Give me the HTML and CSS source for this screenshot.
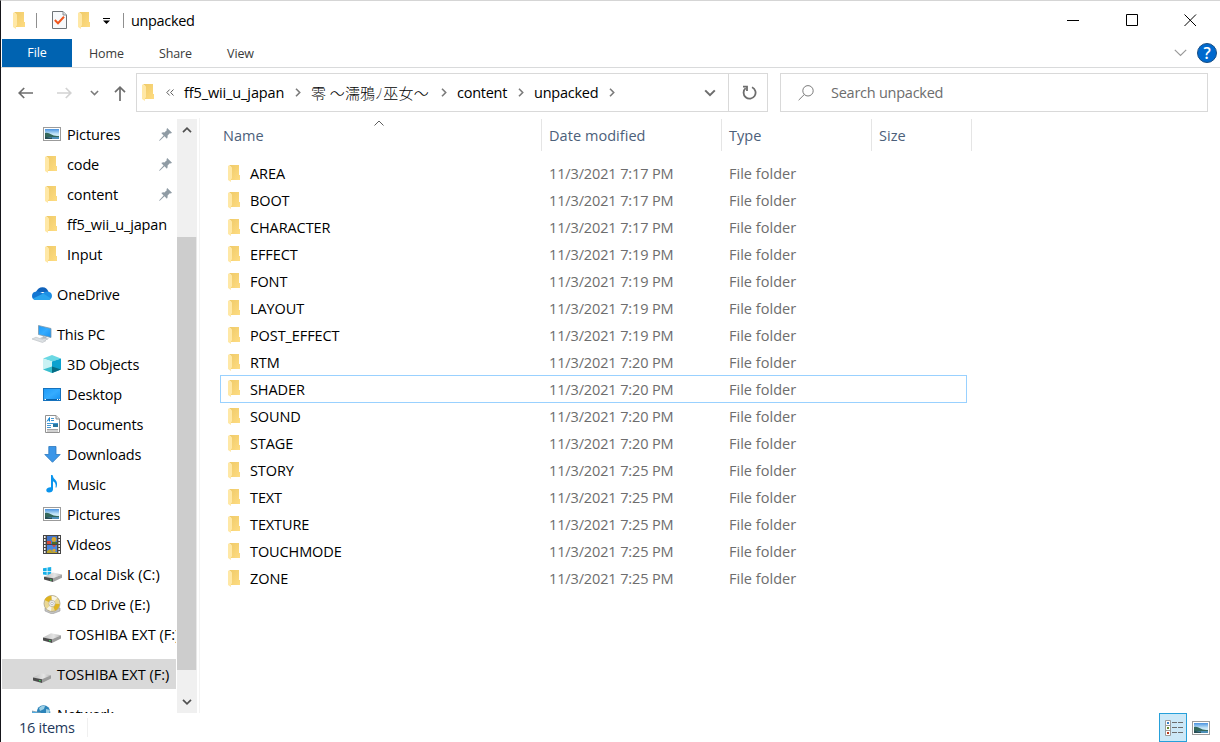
FILE: index.html
```html
<!DOCTYPE html>
<html lang="en">
<head>
  <meta charset="UTF-8" />
  <title>unpacked</title>
  <link rel="stylesheet" href="styles.css">
</head>
<body>

  <!-- shared icons -->
  <svg class="defs" width="0" height="0">
    <defs>
      <linearGradient id="gold" x1="0" x2="1" y1="0" y2="1">
        <stop offset="0" stop-color="#efca68" /><stop offset="1" stop-color="#fedc82" />
      </linearGradient>
      <linearGradient id="sky" x1="0" x2="0" y1="0" y2="1">
        <stop offset="0" stop-color="#4a93e0" /><stop offset="0.5" stop-color="#c5e6f7" /><stop offset="1" stop-color="#d9f0f8" />
      </linearGradient>
      <linearGradient id="screen" x1="0" x2="1" y1="0" y2="1">
        <stop offset="0" stop-color="#1e9bf8" /><stop offset="0.5" stop-color="#35acff" /><stop offset="1" stop-color="#1690f0" />
      </linearGradient>
      <linearGradient id="metal" x1="0" x2="1">
        <stop offset="0" stop-color="#bdbdbd" /><stop offset="0.6" stop-color="#e4e4e4" /><stop offset="1" stop-color="#b5b5b5" />
      </linearGradient>
    </defs>

    <symbol id="folder" viewBox="0 0 12 17">
      <path d="M1 0H11V10H12V15H3V2Z" fill="url(#gold)" />
      <path d="M0 0.5L3 1.5Q4 2 4 3V13.5L3 14V17L0 15Z" fill="#ffe8a6" />
    </symbol>

    <symbol id="pictures" viewBox="0 0 18 14">
      <rect x="0.5" y="0.5" width="17" height="13" fill="#fff" stroke="#9b9b9b" />
      <rect x="2" y="2" width="14" height="10" fill="url(#sky)" />
      <path d="M2 6Q5 5 8 7.3T16 9V10H2Z" fill="#34685b" />
      <path d="M2 10H16V12H2Z" fill="#4d8fb8" />
      <path d="M2 9.5Q6 11 9 10.5V12H2Z" fill="#294f55" />
    </symbol>

    <symbol id="pin" viewBox="0 0 13 13">
      <path d="M8.2 0L13 4.8L11.8 5.5L10.8 5.2L8.6 7.6Q9 9.4 7.9 10.7L5.5 8.3L0.8 12.8L0 12.4L4.6 7.4L2.3 5.1Q3.8 4 5.4 4.4L7.8 2.2L7.5 1.2Z" fill="#8f9ba4" />
    </symbol>

    <symbol id="cloud" viewBox="0 0 20 14">
      <path d="M4 5Q6 0.3 10.5 0.3Q15 0.3 16.5 5Z" fill="#0f62bb" />
      <path d="M0 9Q0 4.8 4.5 4.4Q8 4 13 8L7 13H3.5Q0 12.5 0 9Z" fill="#1376d3" />
      <path d="M10 7Q13 4 16.2 4.7Q20 5.3 20 9Q19.6 13 16 13Z" fill="#1d8fe4" />
      <path d="M1 11.4L11.3 6.4L19 11.5Q18 13 16 13H4Q2 13 1 11.4Z" fill="#2aa4ee" />
    </symbol>

    <symbol id="pc" viewBox="0 0 20 18">
      <path d="M6.5 0.5L19 3.5V12.5L6.5 9.5Z" fill="url(#screen)" stroke="#7e98aa" stroke-width="0.8" />
      <path d="M11 11L14.5 12V13.5L10 13Z" fill="#aeb6bd" />
      <path d="M9 12.2L17 13.5L15 15L8 13.5Z" fill="#c1c6cb" />
      <path d="M0 14L4 12.2L14 15.7L10.5 17.5Z" fill="#dce0e3" stroke="#b8bdc2" stroke-width="0.6" />
    </symbol>

    <symbol id="cube" viewBox="0 0 18 18">
      <path d="M9 0L18 3.5L9 6.5L0 3.5Z" fill="#6bd8e3" />
      <path d="M0 3.5L9 6.5V18L0 14.5Z" fill="#c9f2f4" />
      <path d="M18 3.5L9 6.5V18L18 14.5Z" fill="#0ca2cf" />
      <path d="M0 14.5L9 11.5V18Z" fill="#39bfcf" />
      <path d="M18 14.5L9 11.5V18Z" fill="#076b82" />
    </symbol>

    <symbol id="desktop" viewBox="0 0 18 13">
      <rect x="0.5" y="0.5" width="17" height="12" fill="url(#screen)" stroke="#1672bd" />
      <path d="M1 11.5H17" stroke="#0964ad" />
      <path d="M1.5 11.5H3M14 11.5H15M16 11.5H17" stroke="#fff" />
    </symbol>

    <symbol id="document" viewBox="0 0 15 18">
      <path d="M0.5 0.5H11L14.5 4V17.5H0.5Z" fill="#fff" stroke="#929292" />
      <path d="M11 0.5V4H14.5" fill="#e5e5e5" stroke="#929292" />
      <path d="M2 6.5L4.5 2.5V6.5M3 5H5" stroke="#1585d3" fill="none" />
      <path d="M6 3.5H9M6 5.5H9M2 8.5H13M2 10.5H6M2 12.5H6" stroke="#4297d4" />
      <rect x="8" y="9" width="5" height="3" fill="#28769f" />
      <path d="M2 14.5H13M2 16H13" stroke="#a3a3a3" />
    </symbol>

    <symbol id="download" viewBox="0 0 17 17">
      <path d="M4.8 0.5H12V8.5H16.2L8.5 16.3L0.8 8.5H4.8Z" fill="#3b96e8" stroke="#2b77bd" stroke-width="0.8" />
    </symbol>

    <symbol id="music" viewBox="0 0 12 18">
      <path d="M5 0H6.5Q7 3 9.5 5Q12 7.5 10.5 12.5H9.5Q10.5 8 7 6.3V14.5Q6.7 17.5 3 17.6Q0 17.2 0.3 14.8Q1 12 5 12.2Z" fill="#0a94ed" />
    </symbol>

    <symbol id="video" viewBox="0 0 18 19">
      <rect width="18" height="19" fill="#454545" />
      <path d="M1.8 1V19M16.2 1V19" stroke="#f2f2f2" stroke-width="1.6" stroke-dasharray="2 1" />
      <rect x="4" y="1" width="10" height="8" fill="#4476c8" />
      <rect x="4" y="10" width="10" height="8" fill="#4a86df" />
      <path d="M4 6H8V9H4Z" fill="#d64a36" />
      <circle cx="11" cy="4.5" r="2.4" fill="#dda92c" />
      <path d="M9 7H14V9H9Z" fill="#4c6e27" />
      <path d="M9 10H13L11 12.5Z" fill="#d64a36" />
      <path d="M4 16L7 14L10 17H14V18H4Z" fill="#bba32c" />
      <circle cx="11" cy="15.3" r="1.6" fill="#e0a32a" />
    </symbol>

    <symbol id="drive" viewBox="0 0 18 10">
      <path d="M0 4.6L8 0.3L18 2.2L9 6.2Z" fill="url(#metal)" />
      <path d="M0 4.6L9 6.2V10L0 7.5Z" fill="#4c4c4c" />
      <path d="M9 6.2L18 2.2V5.5L9 10Z" fill="#9c9c9c" />
      <rect x="6" y="7" width="1.6" height="1.2" fill="#3bcb58" />
    </symbol>

    <symbol id="system-drive" viewBox="0 0 19 15">
      <path d="M0 1.2L3.7 0.7V3.9H0ZM4.5 0.6L8.2 0V3.9H4.5ZM0 4.7H3.7V8L0 7.5ZM4.5 4.7H8.2V8.6L4.5 8.1Z" fill="#18b0e8" />
      <path d="M1 9.7L10 5.5L19 7.5L10 11.3Z" fill="url(#metal)" />
      <path d="M1 9.7L10 11.3V15L1 12.5Z" fill="#4c4c4c" />
      <path d="M10 11.3L19 7.5V10.8L10 15Z" fill="#a2a2a2" />
      <rect x="7" y="12.3" width="1.6" height="1.2" fill="#3bcb58" />
    </symbol>

    <symbol id="cd" viewBox="0 0 18 19">
      <path d="M2 13L9 11L17 13V16L9 19L2 16Z" fill="#c3c3c3" stroke="#999" stroke-width="0.6" />
      <circle cx="9" cy="8.5" r="8" fill="#ead895" stroke="#a8a28c" stroke-width="0.8" />
      <path d="M9 8.5L1.5 5Q3.5 1 8 0.7ZM9 8.5L16.7 9Q16 14 12 15.8Z" fill="#dfb321" />
      <path d="M9 8.5L9 0.7L14.5 2.8ZM9 8.5L8 16L3.5 14Z" fill="#f7f4e8" />
      <circle cx="9" cy="8.5" r="3.2" fill="#f0f0ee" stroke="#b3ad98" stroke-width="0.7" />
      <circle cx="9" cy="8.5" r="1.3" fill="#fff" stroke="#999" stroke-width="0.6" />
    </symbol>

    <symbol id="network" viewBox="0 0 19 18">
      <circle cx="11.5" cy="7" r="6.8" fill="#2b83b9" />
      <path d="M7 3Q10 0 13 1L12 4L8 6ZM14 4L18 5L17 9L14 8Z" fill="#9ccfe5" />
      <path d="M0 6L9 8V15L0 13Z" fill="#48aeea" stroke="#8198a8" stroke-width="0.8" />
    </symbol>

    <symbol id="chevron" viewBox="0 0 10 6">
      <path d="M1 0.8L5 4.8L9 0.8" fill="none" stroke="currentColor" stroke-width="1.7" />
    </symbol>
    <symbol id="crumb" viewBox="0 0 6 9">
      <path d="M1 0.8L4.7 4.5L1 8.2" fill="none" stroke="#7b7b7b" stroke-width="1.6" />
    </symbol>
  </svg>

  <div class="window">
    <header class="titlebar">
      <svg class="folder"><use href="#folder" /></svg>
      <span class="divider first"></span>
      <svg class="properties" viewBox="0 0 15 18">
        <path d="M0.5 0.5H11L14.5 4V17.5H0.5Z" fill="#f7f9fb" stroke="#6f7478" />
        <path d="M11 0.5V4H14.5" fill="#ddd" stroke="#8d9296" />
        <path d="M2.8 9L6 12.2L12 5.8" fill="none" stroke="#f0561d" stroke-width="2" />
      </svg>
      <svg class="folder new"><use href="#folder" /></svg>
      <svg class="customize" viewBox="0 0 7 6"><path d="M0 0H7V1H0ZM0 2.5H7L3.5 6Z" /></svg>
      <span class="divider"></span>
      <h1>unpacked</h1>
      <div class="controls">
        <svg viewBox="0 0 13 13"><path d="M0 6.5H12" /></svg>
        <svg viewBox="0 0 13 13"><path d="M0.5 0.5H11.5V11.5H0.5Z" /></svg>
        <svg viewBox="0 0 13 13"><path d="M0.5 0.5L12 12M12 0.5L0.5 12" /></svg>
      </div>
    </header>

    <nav class="tabs">
      <span class="tab file">File</span>
      <span class="tab home">Home</span>
      <span class="tab share">Share</span>
      <span class="tab view">View</span>
      <svg class="expand" viewBox="0 0 13 8"><path d="M0.8 0.8L6.5 6.5L12.2 0.8" /></svg>
      <span class="help">?</span>
    </nav>

    <div class="toolbar">
      <div class="nav">
        <svg class="back" viewBox="0 0 15 12"><path d="M15 6H1M6.2 1L1.2 6L6.2 11" /></svg>
        <svg class="forward" viewBox="0 0 15 12"><path d="M0 6H14M8.8 1L13.8 6L8.8 11" /></svg>
        <svg class="recent"><use href="#chevron" /></svg>
        <svg class="up" viewBox="0 0 12 15"><path d="M6 15V1M1 6.2L6 1.2L11 6.2" /></svg>
      </div>
      <div class="address">
        <svg class="folder"><use href="#folder" /></svg>
        <svg class="more" viewBox="0 0 8 7"><path d="M3.7 0.5L0.8 3.5L3.7 6.5M7.5 0.5L4.6 3.5L7.5 6.5" /></svg>
        <span class="crumb c1">ff5_wii_u_japan</span>
        <svg class="sep"><use href="#crumb" /></svg>
        <span class="crumb jp">零 ～濡鴉<i>ノ</i>巫女～</span>
        <svg class="sep"><use href="#crumb" /></svg>
        <span class="crumb c3">content</span>
        <svg class="sep"><use href="#crumb" /></svg>
        <span class="crumb c4">unpacked</span>
        <svg class="sep"><use href="#crumb" /></svg>
        <svg class="history"><use href="#chevron" /></svg>
        <div class="refresh">
          <svg viewBox="0 0 15 15"><path d="M10 2.2A6 6 0 1 1 3.6 3.2" /><path d="M1 1.6H5V6" /></svg>
        </div>
      </div>
      <div class="search">
        <svg viewBox="0 0 16 16"><circle cx="10" cy="5.8" r="5.2" /><path d="M6.3 9.5L0.6 15.2" /></svg>
        <span>Search unpacked</span>
      </div>
    </div>

    <main>
      <aside>
        <ul class="tree">
          <li><svg class="i-pictures"><use href="#pictures" /></svg><span>Pictures</span><svg class="pin"><use href="#pin" /></svg></li>
          <li><svg class="folder"><use href="#folder" /></svg><span>code</span><svg class="pin"><use href="#pin" /></svg></li>
          <li><svg class="folder"><use href="#folder" /></svg><span>content</span><svg class="pin"><use href="#pin" /></svg></li>
          <li><svg class="folder"><use href="#folder" /></svg><span>ff5_wii_u_japan</span></li>
          <li><svg class="folder"><use href="#folder" /></svg><span>Input</span></li>
          <li class="root"><svg class="i-cloud"><use href="#cloud" /></svg><span>OneDrive</span></li>
          <li class="root"><svg class="i-pc"><use href="#pc" /></svg><span>This PC</span></li>
          <li><svg class="i-cube"><use href="#cube" /></svg><span>3D Objects</span></li>
          <li><svg class="i-desktop"><use href="#desktop" /></svg><span>Desktop</span></li>
          <li><svg class="i-document"><use href="#document" /></svg><span>Documents</span></li>
          <li><svg class="i-download"><use href="#download" /></svg><span>Downloads</span></li>
          <li><svg class="i-music"><use href="#music" /></svg><span>Music</span></li>
          <li><svg class="i-pictures"><use href="#pictures" /></svg><span>Pictures</span></li>
          <li><svg class="i-video"><use href="#video" /></svg><span>Videos</span></li>
          <li><svg class="i-system"><use href="#system-drive" /></svg><span class="wide">Local Disk (C:)</span></li>
          <li><svg class="i-cd"><use href="#cd" /></svg><span class="wide">CD Drive (E:)</span></li>
          <li><svg class="i-drive"><use href="#drive" /></svg><span class="wide">TOSHIBA EXT (F:)</span></li>
          <li class="root selected"><svg class="i-drive"><use href="#drive" /></svg><span class="wide">TOSHIBA EXT (F:)</span></li>
          <li class="root"><svg class="i-network"><use href="#network" /></svg><span>Network</span></li>
        </ul>
        <div class="scrollbar">
          <svg class="flip"><use href="#chevron" /></svg>
          <div class="thumb"></div>
          <svg><use href="#chevron" /></svg>
        </div>
      </aside>

      <section class="files">
        <div class="columns">
          <span>Name<svg class="sorted" viewBox="0 0 10 6"><path d="M0.5 5.5L5 1L9.5 5.5" /></svg></span>
          <span>Date modified</span>
          <span>Type</span>
          <span>Size</span>
        </div>
        <div class="row"><svg class="folder"><use href="#folder" /></svg><b>AREA</b><time>11/3/2021 7:17 PM</time><em>File folder</em></div>
        <div class="row"><svg class="folder"><use href="#folder" /></svg><b>BOOT</b><time>11/3/2021 7:17 PM</time><em>File folder</em></div>
        <div class="row"><svg class="folder"><use href="#folder" /></svg><b>CHARACTER</b><time>11/3/2021 7:17 PM</time><em>File folder</em></div>
        <div class="row"><svg class="folder"><use href="#folder" /></svg><b>EFFECT</b><time>11/3/2021 7:19 PM</time><em>File folder</em></div>
        <div class="row"><svg class="folder"><use href="#folder" /></svg><b>FONT</b><time>11/3/2021 7:19 PM</time><em>File folder</em></div>
        <div class="row"><svg class="folder"><use href="#folder" /></svg><b>LAYOUT</b><time>11/3/2021 7:19 PM</time><em>File folder</em></div>
        <div class="row"><svg class="folder"><use href="#folder" /></svg><b>POST_EFFECT</b><time>11/3/2021 7:19 PM</time><em>File folder</em></div>
        <div class="row"><svg class="folder"><use href="#folder" /></svg><b>RTM</b><time>11/3/2021 7:20 PM</time><em>File folder</em></div>
        <div class="row focused"><svg class="folder"><use href="#folder" /></svg><b>SHADER</b><time>11/3/2021 7:20 PM</time><em>File folder</em></div>
        <div class="row"><svg class="folder"><use href="#folder" /></svg><b>SOUND</b><time>11/3/2021 7:20 PM</time><em>File folder</em></div>
        <div class="row"><svg class="folder"><use href="#folder" /></svg><b>STAGE</b><time>11/3/2021 7:20 PM</time><em>File folder</em></div>
        <div class="row"><svg class="folder"><use href="#folder" /></svg><b>STORY</b><time>11/3/2021 7:25 PM</time><em>File folder</em></div>
        <div class="row"><svg class="folder"><use href="#folder" /></svg><b>TEXT</b><time>11/3/2021 7:25 PM</time><em>File folder</em></div>
        <div class="row"><svg class="folder"><use href="#folder" /></svg><b>TEXTURE</b><time>11/3/2021 7:25 PM</time><em>File folder</em></div>
        <div class="row"><svg class="folder"><use href="#folder" /></svg><b>TOUCHMODE</b><time>11/3/2021 7:25 PM</time><em>File folder</em></div>
        <div class="row"><svg class="folder"><use href="#folder" /></svg><b>ZONE</b><time>11/3/2021 7:25 PM</time><em>File folder</em></div>
      </section>
    </main>

    <footer>
      <span class="count">16 items</span>
      <span class="details">
        <svg viewBox="0 0 18 16">
          <path d="M0.5 0.5H5.5V15.5H0.5ZM0.5 5.5H5.5M0.5 10.5H5.5" fill="#fff" stroke="#9b9b9b" />
          <path d="M7 2.5H12M13 2.5H18M7 7.5H12M13 7.5H18M7 12.5H12M13 12.5H18" stroke="#6d6d6d" />
          <rect x="2" y="2" width="2" height="2" fill="#3a7fc8" />
          <rect x="2" y="7" width="2" height="2" fill="#668b2f" />
          <rect x="2" y="12" width="2" height="2" fill="#b93a1e" />
        </svg>
      </span>
      <svg class="i-pictures"><use href="#pictures" /></svg>
    </footer>
  </div>

</body>
</html>
```

FILE: styles.css
```css
* {
  box-sizing: border-box;
}

body {
  margin: 0;
  background: #fff;
  font-family: 'Open Sans', 'Noto Sans', 'Noto Sans CJK JP', sans-serif;
  font-size: 14.5px;
  letter-spacing: -0.25px;
  color: #000;
}

svg {
  display: block;
  flex: none;
}

.defs {
  position: absolute;
}

.window {
  width: 1220px;
  height: 742px;
  display: flex;
  flex-direction: column;
  border-top: 1px solid #d5d5d5;
  border-left: 1px solid #15151a;
  overflow: hidden;
}

.folder {
  width: 12px;
  height: 17px;
}

/* title bar */
.titlebar {
  height: 38px;
  display: flex;
  align-items: center;
  padding-left: 12px;
}

.divider {
  width: 1px;
  height: 15px;
  background: #8f8f8f;
}

.divider.first {
  margin: 0 15px 0 11px;
}

.properties {
  width: 15px;
  height: 18px;
}

.new {
  margin: 1px 13px 0 11px;
}

.customize {
  width: 7px;
  height: 6px;
  margin: 2px 13px 0 0;
}

.titlebar h1 {
  margin: 0 0 0 7px;
  font-size: 14.5px;
  font-weight: normal;
  letter-spacing: -0.35px;
}

.controls {
  display: flex;
  gap: 45px;
  margin: 0 23px 0 auto;
}

.controls svg {
  width: 13px;
  height: 13px;
  fill: none;
  stroke: #000;
}

.controls svg:first-child {
  margin-right: 1px;
}

/* ribbon tabs */
.tabs {
  height: 29px;
  display: flex;
  align-items: center;
  padding-left: 1px;
  border-bottom: 1px solid #d9dadb;
  font-size: 12.5px;
  letter-spacing: -0.1px;
  color: #3b3b3b;
}

.file {
  width: 70px;
  line-height: 28px;
  background: #0063b1;
  color: #fff;
  text-align: center;
}

.home {
  margin-left: 17px;
}

.share {
  margin-left: 35px;
}

.view {
  margin-left: 35px;
}

.expand {
  width: 13px;
  height: 8px;
  margin: 0 10px 0 auto;
  fill: none;
  stroke: #9a9a9a;
  stroke-width: 1.2;
}

.help {
  width: 20px;
  height: 20px;
  margin-right: 3px;
  border: 1px solid #174d83;
  border-radius: 50%;
  background: #0069ce;
  color: #fff;
  font-size: 16px;
  font-weight: 600;
  line-height: 18px;
  text-align: center;
}

/* address bar */
.toolbar {
  height: 50px;
  display: flex;
  padding-top: 5px;
}

.nav {
  width: 135px;
  height: 39px;
  display: flex;
  align-items: center;
  padding-left: 17px;
  fill: none;
  stroke: #6d6d6d;
  stroke-width: 1.7;
}

.back,
.forward {
  width: 15px;
  height: 12px;
}

.forward {
  margin-left: 24px;
  stroke: #d2d2d2;
}

.recent {
  width: 9px;
  height: 6px;
  margin-left: 18px;
  color: #7b7b7b;
}

.up {
  width: 12px;
  height: 15px;
  margin: 2px 0 0 15px;
}

.address {
  width: 632px;
  height: 39px;
  display: flex;
  align-items: center;
  padding-left: 5px;
  border: 1px solid #d9d9d9;
}

.more {
  width: 8px;
  height: 7px;
  margin-left: 12px;
  fill: none;
  stroke: #5d5d5d;
}

.crumb {
  margin-left: 10px;
  white-space: nowrap;
}

.c1 {
  width: 101px;
  letter-spacing: -0.12px;
}

.jp {
  width: 120px;
  font-family: 'Noto Sans CJK JP', sans-serif;
  font-size: 15px;
  font-weight: 300;
  letter-spacing: 0.2px;
}

.jp i {
  display: inline-block;
  width: 8px;
  font-style: normal;
  transform: scaleX(0.55);
  transform-origin: left;
}

.c3 {
  width: 51px;
}

.c4 {
  width: 65px;
}

.sep {
  width: 6px;
  height: 9px;
  margin: -1px 0 0 10px;
}

.history {
  width: 12px;
  height: 8px;
  margin-left: auto;
  color: #6d6d6d;
}

.refresh {
  width: 39px;
  height: 37px;
  display: flex;
  align-items: center;
  justify-content: center;
  margin-left: 12px;
  border-left: 1px solid #d9d9d9;
}

.refresh svg {
  width: 15px;
  height: 15px;
  margin-left: 2px;
  fill: none;
  stroke: #6d6d6d;
  stroke-width: 1.8;
}

.search {
  width: 428px;
  height: 39px;
  display: flex;
  align-items: center;
  gap: 17px;
  margin-left: 12px;
  padding-left: 17px;
  border: 1px solid #d9d9d9;
  color: #6d6d6d;
}

.search svg {
  width: 16px;
  height: 16px;
  fill: none;
  stroke: #7c7c7c;
}

/* navigation pane */
main {
  height: 595px;
  display: flex;
}

aside {
  width: 199px;
  display: flex;
  border-right: 1px solid #f3f3f3;
}

.tree {
  width: 176px;
  height: 595px;
  margin: 0;
  padding: 1px 1px 0;
  list-style: none;
  overflow: hidden;
}

.tree li {
  height: 30px;
  display: flex;
  align-items: center;
  padding-left: 41px;
  overflow: hidden;
}

.tree li span {
  margin-left: auto;
  width: 109px;
  flex: none;
  white-space: nowrap;
  letter-spacing: -0.14px;
}

.tree li .wide {
  letter-spacing: 0;
}

.tree .pin {
  width: 13px;
  height: 13px;
  margin: 0 4px 0 -17px;
}

.tree .root {
  margin-top: 10px;
  padding-left: 30px;
}

.tree .root span {
  width: 119px;
}

.selected {
  background: #d9d9d9;
}

.tree .folder {
  margin-left: 2px;
}

.i-pictures {
  width: 18px;
  height: 14px;
}

.i-cloud {
  width: 20px;
  height: 14px;
}

.i-pc {
  width: 20px;
  height: 18px;
}

.i-cube {
  width: 18px;
  height: 18px;
}

.i-desktop {
  width: 18px;
  height: 13px;
}

.i-document {
  width: 15px;
  height: 18px;
  margin-left: 2px;
}

.i-download {
  width: 17px;
  height: 17px;
  margin-left: 1px;
}

.i-music {
  width: 12px;
  height: 18px;
  margin-left: 3px;
}

.i-video {
  width: 18px;
  height: 19px;
}

.i-system {
  width: 19px;
  height: 15px;
}

.i-cd {
  width: 18px;
  height: 19px;
}

.i-drive {
  width: 18px;
  height: 10px;
  margin-top: 7px;
}

.root .i-drive {
  margin-left: 1px;
}

.i-network {
  width: 19px;
  height: 18px;
}

.scrollbar {
  width: 20px;
  height: 594px;
  display: flex;
  flex-direction: column;
  align-items: center;
  margin-top: 1px;
  padding: 8px 0 8px;
  background: #f0f0f0;
  color: #505050;
}

.scrollbar svg {
  width: 10px;
  height: 6px;
  margin-right: 1px;
}

.flip {
  transform: scaleY(-1);
}

.thumb {
  width: 20px;
  height: 433px;
  margin: 104px 0 29px;
  border-right: 1px solid #e8e8e8;
  background: #cdcdcd;
}

/* file list */
.files {
  flex: 1;
  padding-left: 20px;
}

.columns {
  height: 33px;
  display: flex;
  margin: 1px 0 8px;
  letter-spacing: 0.05px;
  color: #4c607a;
}

.columns span {
  width: 180px;
  height: 32px;
  padding-left: 7px;
  border-right: 1px solid #e5e5e5;
  line-height: 33px;
  position: relative;
}

.columns span:first-child {
  width: 322px;
  padding-left: 3px;
}

.columns span:nth-child(3) {
  width: 150px;
}

.columns span:last-child {
  width: 100px;
}

.sorted {
  position: absolute;
  top: 1px;
  left: 154px;
  width: 10px;
  height: 6px;
  fill: none;
  stroke: #5d5d5d;
}

.row {
  width: 747px;
  height: 27px;
  display: flex;
  align-items: center;
  padding-left: 8px;
  color: #6d6d6d;
}

.row b {
  width: 299px;
  margin-left: 10px;
  font-weight: normal;
  letter-spacing: -0.1px;
  color: #000;
}

.row .folder {
  margin-top: -1px;
}

.row time {
  width: 180px;
  letter-spacing: -0.13px;
}

.row em {
  font-style: normal;
  letter-spacing: 0.02px;
}

.focused {
  height: 28px;
  margin-top: -1px;
  padding-left: 7px;
  border: 1px solid #99d1ff;
}

/* status bar */
footer {
  height: 29px;
  display: flex;
  align-items: center;
  padding: 0 10px 0 18px;
  color: #1e395b;
}

.count {
  width: 69px;
  margin-right: auto;
  border-right: 1px solid #f0f0f0;
}

.details {
  width: 28px;
  height: 29px;
  display: flex;
  align-items: center;
  justify-content: center;
  margin-right: 5px;
  border: 1px solid #26a0da;
  background: #cce8f7;
}

.details svg {
  width: 18px;
  height: 16px;
  margin-left: 1px;
}
```
